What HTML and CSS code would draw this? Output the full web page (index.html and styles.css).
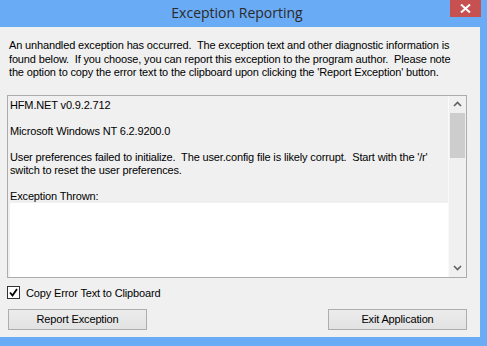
FILE: index.html
```html
<!DOCTYPE html>
<html lang="en">
<head>
  <meta charset="UTF-8" />
  <title>Exception Reporting</title>
  <link rel="stylesheet" href="styles.css">
</head>
<body>
  <div class="window">
    <div class="titlebar">
      <span class="title">Exception Reporting</span>
      <button class="close" aria-label="Close">
        <svg width="11" height="9" viewBox="0 0 11 9">
          <path d="M1 0.5 L10 8.5 M10 0.5 L1 8.5" stroke="#fff" stroke-width="2" fill="none"/>
        </svg>
      </button>
    </div>

    <div class="client">
      <p class="intro">An unhandled exception has occurred.&nbsp; The exception text and other diagnostic information is<br>found below.&nbsp; If you choose, you can report this exception to the program author.&nbsp; Please note<br>the option to copy the error text to the clipboard upon clicking the 'Report Exception' button.</p>

      <div class="textbox">
        <div class="content">
          <div class="details">
            <p>HFM.NET v0.9.2.712</p>
            <p>Microsoft Windows NT 6.2.9200.0</p>
            <p>User preferences failed to initialize.&nbsp; The user.config file is likely corrupt.&nbsp; Start with the '/r'<br>switch to reset the user preferences.</p>
            <p>Exception Thrown:</p>
          </div>
          <div class="blank"></div>
        </div>
        <div class="scrollbar">
          <span class="arrow">
            <svg width="9" height="6" viewBox="0 0 9 6"><path d="M1 5 L4.5 1.5 L8 5" stroke="#606060" stroke-width="1.6" fill="none"/></svg>
          </span>
          <span class="thumb"></span>
          <span class="track"></span>
          <span class="arrow">
            <svg width="9" height="6" viewBox="0 0 9 6"><path d="M1 1 L4.5 4.5 L8 1" stroke="#606060" stroke-width="1.6" fill="none"/></svg>
          </span>
        </div>
      </div>

      <label class="check">
        <span class="box">
          <svg width="11" height="11" viewBox="0 0 11 11"><path d="M2 5.5 L4.5 8.5 L9 2" stroke="#000" stroke-width="1.8" fill="none"/></svg>
        </span>
        Copy Error Text to Clipboard
      </label>

      <div class="buttons">
        <button class="btn">Report Exception</button>
        <button class="btn">Exit Application</button>
      </div>
    </div>
  </div>
</body>
</html>
```

FILE: styles.css
```css
body {
  margin: 0;
  background-color: #6aabf5;
  font-family: "Liberation Sans", Arial, sans-serif;
  font-size: 11px;
  letter-spacing: -0.15px;
  color: #000;
}
.window {
  width: 487px;
  height: 346px;
}
.titlebar {
  display: flex;
  align-items: flex-start;
  height: 27px;
  padding-right: 6px;
}
.title {
  flex: 1;
  text-align: center;
  padding-left: 24px;
  padding-top: 4px;
  font-family: "Open Sans", "Noto Sans", sans-serif;
  font-size: 14px;
  letter-spacing: 0;
  line-height: 18px;
  color: #2a2a2a;
}
.close {
  width: 31px;
  height: 17px;
  border: none;
  padding: 0;
  background-color: #c75050;
  display: flex;
  align-items: center;
  justify-content: center;
}
.client {
  width: 480px;
  height: 310px;
  background-color: #f0f0f0;
  box-sizing: border-box;
  padding: 12px 0 0 7px;
}
.intro {
  margin: 0 0 15px 2px;
  line-height: 13.5px;
}
.textbox {
  display: flex;
  width: 460px;
  height: 183px;
  box-sizing: border-box;
  border: 1px solid #acacac;
}
.content {
  flex: 1;
  display: flex;
  flex-direction: column;
  border-right: 1px solid #fafafa;
}
.details {
  padding: 3px 0 0 2px;
  line-height: 13px;
}
.details p {
  margin: 0 0 13px;
}
.details p:last-child {
  margin: 0;
}
.blank {
  flex: 1;
  background-color: #fff;
  margin-left: 2px;
}
.scrollbar {
  width: 17px;
  display: flex;
  flex-direction: column;
  align-items: center;
  background-color: #f0f0f0;
}
.arrow {
  height: 17px;
  display: flex;
  align-items: center;
  justify-content: center;
}
.thumb {
  width: 15px;
  height: 45px;
  background-color: #cdcdcd;
}
.track {
  flex: 1;
}
.check {
  display: flex;
  align-items: center;
  gap: 6px;
  margin-top: 8px;
  height: 14px;
}
.box {
  width: 11px;
  height: 11px;
  border: 1px solid #333;
  background-color: #fff;
  display: flex;
}
.buttons {
  display: flex;
  justify-content: space-between;
  width: 459px;
  margin-top: 9px;
  padding-left: 1px;
}
.btn {
  width: 139px;
  height: 21px;
  border: 1px solid #adadad;
  background: linear-gradient(#ececec, #e2e2e2);
  font-family: "Liberation Sans", Arial, sans-serif;
  font-size: 11px;
  letter-spacing: -0.15px;
  color: #000;
  padding: 0;
}
```
